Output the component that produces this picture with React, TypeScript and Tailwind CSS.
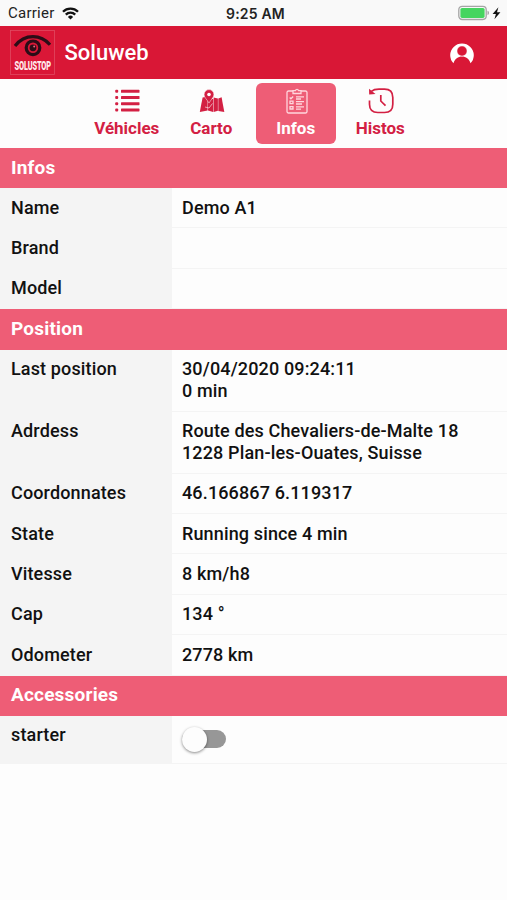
import type { ReactNode } from 'react';
import clsx from 'clsx';

type Row = {
    label: string;
    lines?: string[];
    control?: ReactNode;
};

function Wifi() {
    return (
        <svg className="h-[13px] w-[17px]" viewBox="0 0 17 13" fill="none" stroke="#111" strokeWidth="2.3">
            <path d="M1 4.7a10.6 10.6 0 0 1 15 0" />
            <path d="M3.8 7.6a6.6 6.6 0 0 1 9.4 0" />
            <path d="M8.5 12.6 5.9 9.9a3.7 3.7 0 0 1 5.2 0z" fill="#111" stroke="none" />
        </svg>
    );
}

function Battery() {
    return (
        <svg className="h-4 w-[44px]" viewBox="0 0 44 16">
            <rect x="0.8" y="1.3" width="27.4" height="13.2" rx="3.4" fill="#f8f8f8" stroke="#a5a5a5" strokeWidth="1.3" />
            <rect x="2.4" y="2.9" width="24.2" height="10" rx="1.6" fill="#45d55f" />
            <path d="M29.5 5.8c2 .7 2 3.6 0 4.3z" fill="#a5a5a5" />
            <path d="M40.4 2.3 34.6 9h3.3l-1.5 5.300 6-7.100H39z" fill="#111" />
        </svg>
    );
}

function Logo() {
    return (
        <svg className="size-[45px]" viewBox="0 0 45 45">
            <rect x="0.5" y="0.5" width="44" height="44" fill="#da1737" stroke="#e04a62" strokeWidth="0.8" />
            <path d="M5 16C10 9.5 16 6.7 23 6.7S35 9 40 14.8" fill="none" stroke="#2b0d17" strokeWidth="3.2" />
            <circle cx="23" cy="17.8" r="6.8" fill="none" stroke="#2b0d17" strokeWidth="3.2" />
            <circle cx="23" cy="17.8" r="3.4" fill="#2b0d17" />
            <circle cx="24.2" cy="16.6" r="1" fill="#e9687b" />
            {/* Condensed wordmark */}
            <text
                transform="translate(22.7 40.3) scale(1 1.8)"
                textAnchor="middle"
                fontFamily="Roboto, sans-serif"
                fontWeight="900"
                fontSize="7.4"
                letterSpacing="-0.15"
                fill="#ffe9ec"
            >
                SOLUSTOP
            </text>
        </svg>
    );
}

function Profile() {
    return (
        <svg className="h-[22px] w-[24px]" viewBox="0 0 24 22">
            <path d="M3.5 21.2A11.8 11.6 0 1 1 20.5 21.2C19 16.8 16 14.6 12 14.6S5 16.8 3.5 21.2z" fill="#fff" />
            <circle cx="12" cy="9" r="5" fill="#d91736" stroke="#fff" strokeWidth="0.4" />
        </svg>
    );
}

function ListIcon() {
    return (
        <svg className="h-6 w-[25px]" viewBox="0 0 25 24" fill="#d32043">
            {[0.8, 7, 13.2, 19.4].map((y) => (
                <g key={y}>
                    <rect x="0.2" y={y} width="3" height="3" rx="1" />
                    <rect x="6" y={y} width="18.5" height="3" rx="0.6" />
                </g>
            ))}
        </svg>
    );
}

function MapIcon() {
    return (
        <svg className="h-6 w-[26px]" viewBox="0 0 26 24" fill="#d32043">
            <path d="M3.6 8.4 8.6 7.4v14.2L.8 23z" />
            <path d="M9 10h5.2v12.9L9 21.600z" />
            <path d="m14.600 8.400 4.300 1.200v12.200l-4.300 1.200z" />
            <path d="m19.300 9.600 3.300-1.400L25.300 23l-6-1.100z" />
            <path d="M10 .6a4.900 4.900 0 0 1 4.900 4.900c0 3.200-3 4.900-4.900 8.600C8.100 10.400 5.100 8.700 5.100 5.500A4.900 4.900 0 0 1 10 .6z" stroke="#fdfdfd" strokeWidth="0.5" />
            <circle cx="10" cy="5.5" r="1.8" fill="#fdfdfd" />
            <path d="m6 18 4 1 3.500-4.500" fill="none" stroke="#fdfdfd" strokeWidth="0.6" />
        </svg>
    );
}

function ChecklistIcon() {
    return (
        <svg className="h-[26px] w-[22px]" viewBox="0 0 22 26" fill="none" stroke="#ffd6dd" strokeWidth="1.3">
            <path d="M7 3H2.5A1.5 1.5 0 0 0 1 4.5v19A1.5 1.5 0 0 0 2.5 25h17a1.5 1.5 0 0 0 1.5-1.5v-19A1.5 1.5 0 0 0 19.5 3H15" />
            <path d="M7 5.5V2.6h2.4a1.7 1.7 0 0 1 3.2 0H15v2.9z" />
            <path d="m3.7 9.5 1.2 1.3L7.2 8.5M4 13.2h3v2.4H4zM4 18.6h3V21H4z" />
            <path d="M10 8.8h8M10 11h5M10 13.7h8M10 16h6M10 18.8h8M10 21.2h5" />
        </svg>
    );
}

function HistoryIcon() {
    return (
        <svg className="h-[26px] w-[26px]" viewBox="0 0 26 26" fill="none" stroke="#d32043" strokeWidth="1.7">
            <path d="M3.3 3.3C5.3 1.7 7.7 1.2 11 1.2h5.5c5.5 0 8.3 2.8 8.3 8.3v6.7c0 5.5-2.8 8.3-8.3 8.3H9.8c-5.5 0-8.3-2.8-8.3-8.3v-3.7" />
            <path d="m1 .8.2 5.8L7.5 6z" fill="#d32043" stroke="none" />
            <path d="M12.8 7v6l4.700 4.600" />
        </svg>
    );
}

const tabs = [
    { label: 'Véhicles', icon: <ListIcon /> },
    { label: 'Carto', icon: <MapIcon /> },
    { label: 'Infos', icon: <ChecklistIcon />, active: true },
    { label: 'Histos', icon: <HistoryIcon /> },
];

function Toggle() {
    return (
        <button role="switch" aria-checked="false" aria-label="starter" className="mt-1.5 flex h-[18px] w-[44px] items-center rounded-full bg-[#979797]">
            <span className="size-[25px] shrink-0 rounded-full bg-[#fdfdfd] shadow-[0_1px_3px_rgba(0,0,0,0.45)]" />
        </button>
    );
}

const sections: { title: string; rows: Row[] }[] = [
    {
        title: 'Infos',
        rows: [{ label: 'Name', lines: ['Demo A1'] }, { label: 'Brand' }, { label: 'Model' }],
    },
    {
        title: 'Position',
        rows: [
            { label: 'Last position', lines: ['30/04/2020 09:24:11', '0 min'] },
            { label: 'Adrdess', lines: ['Route des Chevaliers-de-Malte 18', '1228 Plan-les-Ouates, Suisse'] },
            { label: 'Coordonnates', lines: ['46.166867 6.119317'] },
            { label: 'State', lines: ['Running since 4 min'] },
            { label: 'Vitesse', lines: ['8 km/h8'] },
            { label: 'Cap', lines: ['134 °'] },
            { label: 'Odometer', lines: ['2778 km'] },
        ],
    },
    {
        title: 'Accessories',
        rows: [{ label: 'starter', control: <Toggle /> }],
    },
];

function InfoRow({ label, lines, control }: Row) {
    return (
        <div
            className={clsx(
                'flex text-[18px] leading-[22px] font-medium tracking-[0.14px] text-[#111]',
                control ? 'h-12' : lines && lines.length > 1 ? 'h-[62px]' : 'h-[40.4px]',
            )}
        >
            <div className="w-[172px] shrink-0 bg-[#f4f4f4] pt-[8.6px] pl-[11px]">{label}</div>
            <div className="flex-1 border-b border-[#f4f4f4] pt-[8.6px] pl-2.5 whitespace-nowrap">
                {lines?.map((line) => <div key={line}>{line}</div>)}
                {control}
            </div>
        </div>
    );
}

export default function App() {
    return (
        <div className="flex h-[900px] w-[507px] flex-col overflow-hidden bg-[#fdfdfd] font-[Roboto,sans-serif]">
            {/* Status bar */}
            <div className="grid h-[26px] shrink-0 grid-cols-3 items-center bg-[#f9f9f9] pr-[5px] pl-2 text-[15px] text-[#222]">
                <div className="flex items-center gap-[7px] pt-px tracking-[0.25px]">
                    Carrier
                    <Wifi />
                </div>
                <div className="pl-px text-center font-[Inter,sans-serif] text-[14px] font-semibold tracking-[0.2px]">9:25 AM</div>
                <div className="flex justify-end">
                    <Battery />
                </div>
            </div>

            {/* App header */}
            <header className="flex h-[53px] shrink-0 items-center bg-[#d91736] pr-[33px] pl-[10px]">
                <Logo />
                <h1 className="ml-[9.5px] flex-1 text-[22px] font-medium text-white">Soluweb</h1>
                <Profile />
            </header>

            {/* Tabs */}
            <nav className="flex h-[68.6px] shrink-0 justify-center gap-[5px] pt-1">
                {tabs.map((tab) => (
                    <button
                        key={tab.label}
                        className={clsx(
                            'flex h-[61px] w-[79.5px] flex-col items-center rounded-md pt-1 text-[17px] font-bold',
                            tab.active ? 'bg-[#ee5d76] text-white' : 'text-[#d32043]',
                        )}
                    >
                        <span className="flex h-[27px] items-center pl-0.5">{tab.icon}</span>
                        <span className="leading-[29px]">{tab.label}</span>
                    </button>
                ))}
            </nav>

            {sections.map((section) => (
                <section key={section.title}>
                    <h2 className="flex h-[40.4px] items-center bg-[#ee5d76] pl-[11px] text-[19px] font-bold tracking-[0.2px] text-white">
                        {section.title}
                    </h2>
                    {section.rows.map((row) => <InfoRow key={row.label} {...row} />)}
                </section>
            ))}
        </div>
    );
}
